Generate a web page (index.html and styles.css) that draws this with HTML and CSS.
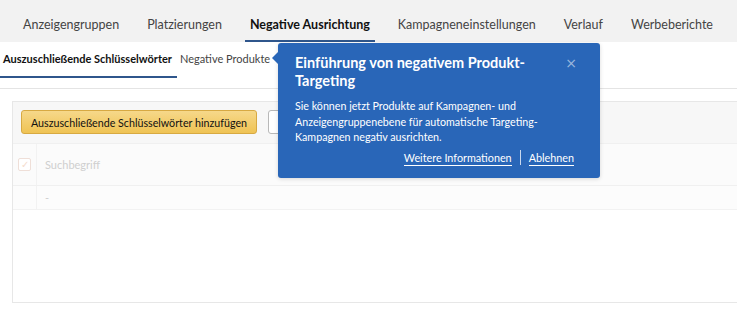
FILE: index.html
```html
<!DOCTYPE html>
<html lang="de">

<head>
    <meta charset="UTF-8">
    <meta name="viewport" content="width=device-width, initial-scale=1.0">
    <title>Negative Ausrichtung</title>
    <link rel="stylesheet" href="styles.css">
</head>

<body>
    <nav class="tabs">
        <a class="tab">Anzeigengruppen</a>
        <a class="tab">Platzierungen</a>
        <a class="tab active">Negative Ausrichtung</a>
        <a class="tab">Kampagneneinstellungen</a>
        <a class="tab">Verlauf</a>
        <a class="tab">Werbeberichte</a>
    </nav>

    <div class="subtabs">
        <a class="subtab active">Auszuschließende Schlüsselwörter</a>
        <a class="subtab">Negative Produkte</a>
    </div>

    <section class="panel">
        <div class="toolbar">
            <button type="button" class="btn-primary">Auszuschließende Schlüsselwörter hinzufügen</button>
            <button type="button" class="btn-secondary" aria-label="Exportieren"></button>
        </div>

        <div class="table">
            <div class="table-head">
                <div class="cell-check"><span class="checkbox">✓</span></div>
                <div class="cell">Suchbegriff</div>
            </div>
            <div class="table-row">
                <div class="cell-check"></div>
                <div class="cell">-</div>
            </div>
        </div>
    </section>

    <!-- Popover over the sub tabs -->
    <div class="popover">
        <button type="button" class="popover-close">×</button>
        <h2 class="popover-title">Einführung von negativem Produkt-Targeting</h2>
        <p class="popover-text">Sie können jetzt Produkte auf Kampagnen- und Anzeigengruppenebene für automatische Targeting-Kampagnen negativ ausrichten.</p>
        <div class="popover-links">
            <a class="popover-link">Weitere Informationen</a>
            <span class="popover-sep"></span>
            <a class="popover-link">Ablehnen</a>
        </div>
    </div>
</body>

</html>
```

FILE: styles.css
```css
/* Basic reset */
* {
    margin: 0;
    padding: 0;
    box-sizing: border-box;
}

body {
    font-family: 'Lato', 'Liberation Sans', sans-serif;
    background-color: #ffffff;
    color: #111111;
    font-size: 12px;
    overflow: hidden;
    position: relative;
}

/* Main tabs */
.tabs {
    display: flex;
    gap: 18px;
    height: 42px;
    padding-left: 18px;
    background-color: #f2f2f2;
}

.tab {
    padding: 15px 5px 0;
    font-size: 12.5px;
    line-height: 20px;
    white-space: nowrap;
    color: #444444;
    border-bottom: 2px solid transparent;
}

.tab.active {
    font-weight: 700;
    color: #111111;
    border-bottom-color: #2f568c;
}

/* Sub tabs */
.subtabs {
    display: flex;
    align-items: flex-start;
    padding: 8px 0 10px;
    border-bottom: 1px solid #e4e4e4;
}

.subtab {
    padding: 0 4px 8px 3px;
    font-size: 11px;
    line-height: 18px;
    white-space: nowrap;
    color: #444444;
    border-bottom: 2px solid transparent;
}

.subtab.active {
    font-weight: 700;
    color: #111111;
    padding-right: 5px;
    border-bottom-color: #2f568c;
}

/* Panel */
.panel {
    margin: 12px -20px 0 12px;
    height: 202px;
    border: 1px solid #e7e7e7;
}

.toolbar {
    display: flex;
    gap: 11px;
    padding: 8px 8px 9px;
    background-color: #f7f7f7;
}

.btn-primary {
    height: 24px;
    padding: 0 9px;
    font-family: inherit;
    font-size: 10.7px;
    color: #111111;
    background: linear-gradient(#f6d88a, #efc354);
    border: 1px solid #d7a942;
    border-radius: 3px;
}

.btn-secondary {
    height: 24px;
    width: 120px;
    background-color: #ffffff;
    border: 1px solid #b8b8b8;
    border-radius: 3px;
}

.table {
    color: #cfcfcf;
    font-size: 11px;
}

.table-head,
.table-row {
    display: flex;
    border-top: 1px solid #f0f0f0;
}

.table-head {
    height: 42px;
    background-color: #fbfbfb;
}

.table-row {
    height: 25px;
    background-color: #fcfcfc;
    border-bottom: 1px solid #f2f2f2;
}

.cell-check {
    width: 24px;
    display: flex;
    align-items: center;
    justify-content: center;
    border-right: 1px solid #f2f2f2;
}

.checkbox {
    width: 13px;
    height: 13px;
    font-size: 10px;
    line-height: 11px;
    text-align: center;
    color: #f5dccd;
    border: 1px solid #efdfd8;
    border-radius: 2px;
    background-color: #ffffff;
}

.cell {
    display: flex;
    align-items: center;
    padding-left: 8px;
}

/* Popover */
.popover {
    position: absolute;
    left: 278px;
    top: 43px;
    width: 322px;
    height: 135px;
    padding: 11px 26px 0 17px;
    background-color: #2966b8;
    border-radius: 3px;
    box-shadow: 0 1px 4px rgba(0, 0, 0, 0.15);
    color: #ffffff;
}

.popover::before {
    content: '';
    position: absolute;
    left: -6px;
    top: 9px;
    border-top: 6px solid transparent;
    border-bottom: 6px solid transparent;
    border-right: 6px solid #2966b8;
}

.popover-close {
    position: absolute;
    right: 23px;
    top: 12px;
    background: none;
    border: none;
    font-family: 'DejaVu Sans', sans-serif;
    font-size: 14px;
    color: #9db7dd;
}

.popover-title {
    width: 250px;
    font-size: 14.5px;
    font-weight: 700;
    line-height: 18px;
}

.popover-text {
    margin-top: 8px;
    font-size: 10.7px;
    line-height: 15.5px;
}

.popover-links {
    display: flex;
    justify-content: flex-end;
    align-items: center;
    gap: 8px;
    margin-top: 5px;
    font-size: 10.8px;
}

.popover-link {
    line-height: 15px;
    border-bottom: 1px solid #ffffff;
}

.popover-sep {
    width: 1px;
    height: 15px;
    background-color: #c9d8ee;
}
```
